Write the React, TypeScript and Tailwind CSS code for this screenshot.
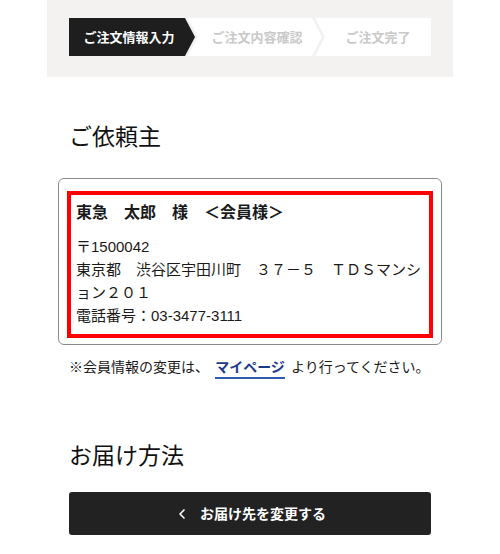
import React from 'react';
import { ChevronLeft } from 'lucide-react';

const steps = [
  { label: 'ご注文情報入力', active: true },
  { label: 'ご注文内容確認', active: false },
  { label: 'ご注文完了', active: false },
];

const StepBar: React.FC = () => (
  <div className="flex h-[38px]">
    {/* first step: flat left, arrow right */}
    <div className="w-[126px] shrink-0 bg-[#1e1e1e] text-white flex items-center justify-center pr-[6px] text-[13px] font-bold [clip-path:polygon(0_0,calc(100%_-_10px)_0,100%_50%,calc(100%_-_10px)_100%,0_100%)]">
      {steps[0].label}
    </div>
    <div className="w-[134px] shrink-0 -ml-[7px] bg-white text-[#c9c9c9] flex items-center justify-center pl-[4px] text-[13px] font-bold [clip-path:polygon(0_0,calc(100%_-_10px)_0,100%_50%,calc(100%_-_10px)_100%,0_100%,10px_50%)]">
      {steps[1].label}
    </div>
    <div className="flex-1 -ml-[7px] bg-white text-[#c9c9c9] flex items-center justify-center pl-[10px] text-[13px] font-bold [clip-path:polygon(0_0,100%_0,100%_100%,0_100%,10px_50%)]">
      {steps[2].label}
    </div>
  </div>
);

export default function App() {
  return (
    <div className="w-[500px] min-h-[554px] bg-white px-[47px] text-[#1a1a1a] font-['Noto_Sans_CJK_JP','Noto_Sans',sans-serif]">
      {/* progress panel */}
      <div className="bg-[#f3f2f0] px-[22px] pt-[18px] pb-[21px]">
        <StepBar />
      </div>

      <div className="px-[22px]">
        <h2 className="mt-[41px] text-[23px] leading-[34px] font-normal text-[#111]">ご依頼主</h2>

        {/* orderer card */}
        <div className="-mx-[11px] mt-[26px] rounded-[6px] border border-[#8a8a8a] px-[8px] pt-[12px] pb-[6px]">
          <div className="border-4 border-[#ff0000] px-[5px] pt-[6px] pb-[7px] font-['Liberation_Sans','Noto_Sans_CJK_JP',sans-serif]">
            <p className="text-[16px] leading-[24px] font-bold mb-[10px]">東急　太郎　様　＜会員様＞</p>
            <div className="text-[15px] leading-[23px]">
              <p>〒1500042</p>
              <p>
                東京都　渋谷区宇田川町　３７－５　ＴＤＳマンシ
                <br />
                ョン２０１
              </p>
              <p>電話番号：03-3477-3111</p>
            </div>
          </div>
        </div>

        <p className="mt-[11px] text-[14px] leading-[21px]">
          ※会員情報の変更は、{' '}
          <a className="mx-[3px] font-bold text-[#1c3a8c] border-b-2 border-[#2d5bb0] pb-[1px]">マイページ</a>
          {' '}より行ってください。
        </p>

        <h2 className="mt-[60px] text-[23px] leading-[34px] font-normal text-[#111]">お届け方法</h2>

        <button className="mt-[21px] w-full h-[43px] rounded-[3px] bg-[#222] text-white flex items-center justify-center gap-[10px] text-[14px] font-bold">
          <ChevronLeft size={16} strokeWidth={2.5} />
          <span>お届け先を変更する</span>
        </button>
      </div>
    </div>
  );
}
